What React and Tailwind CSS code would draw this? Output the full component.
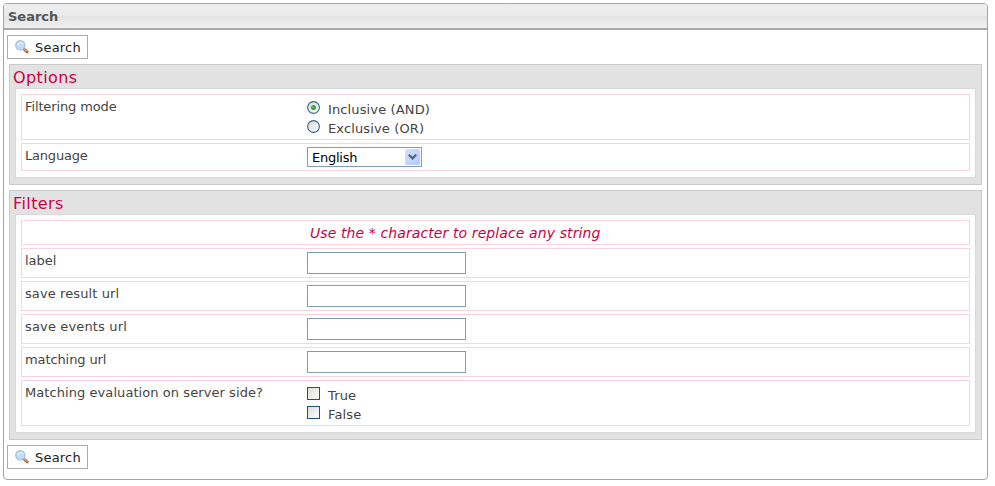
function SearchIcon() {
  return (
    <svg width="14" height="14" viewBox="0 0 14 14" className="block shrink-0">
      <path d="M9.6 9.600l2.600 2.300" stroke="#a5622c" strokeWidth="2.800" strokeLinecap="round" />
      <path d="M9.500 9.200l2.300 2.100" stroke="#e2aa68" strokeWidth="1.3" strokeLinecap="round" />
      <circle cx="5.3" cy="5.3" r="4.6" fill="#bfdcfa" stroke="#a3bfe3" strokeWidth="1.2" />
      <path d="M2 5.2C2 3.2 3.5 2 5.4 2c1.6 0 2.8.9 3.2 2.2C6.500 4 4.500 4.500 2 5.200z" fill="#d9ebfd" />
    </svg>
  );
}

function SearchButton() {
  return (
    <button className="flex h-6 w-[81px] items-center border border-[#ababab] bg-white pl-[7px] text-[13px] leading-4 text-[#222]">
      <SearchIcon />
      <span className="ml-[6px] pt-[2px] tracking-[0.2px]">Search</span>
    </button>
  );
}

function Section({ title, children }) {
  return (
    <section className="mx-[5px] mt-[5px] w-[973px] border border-[#cacaca] bg-[#e2e2e2] px-[5px] pb-[6px]">
      <h2 className="-ml-[2px] h-[23px] pt-[2px] text-[16px] leading-[22px] tracking-[0.4px] text-[#cc0044]">{title}</h2>
      <div className="flex flex-col gap-[3px] border border-[#d9d9d9] bg-white px-[5px] pt-[5px] pb-[6px]">
        {children}
      </div>
    </section>
  );
}

function Row({ label, className, tracking = 'tracking-normal', children }) {
  return (
    <div className={`flex border border-[#fbd3df] pl-[3px] ${className}`}>
      <div className={`w-[282px] shrink-0 pt-1 leading-4 ${tracking}`}>{label}</div>
      <div>{children}</div>
    </div>
  );
}

function Radio({ checked }) {
  return (
    <svg width="13" height="13" viewBox="0 0 13 13" className="mt-[-5px] block shrink-0">
      <defs>
        <linearGradient id="radio" x1="0" y1="0" x2="1" y2="1">
          <stop offset="0" stopColor="#d8d8d2" />
          <stop offset="1" stopColor="#fff" />
        </linearGradient>
      </defs>
      <circle cx="6.5" cy="6.5" r="5.9" fill="url(#radio)" stroke="#336592" strokeWidth="1.1" />
      {checked && <circle cx="6.5" cy="6.5" r="2.5" fill="#27a827" />}
      {checked && <circle cx="6" cy="5.900" r="1" fill="#5fd65a" />}
    </svg>
  );
}

function Checkbox() {
  return (
    <span className="mt-[-5px] block size-[13px] shrink-0 border border-[#1c5180] bg-linear-to-br from-[#dcdcd7] to-white" />
  );
}

function Choice({ control, children }) {
  return (
    <div className="flex h-[19px] items-center">
      {control}
      <span className="ml-2 leading-4 tracking-[0.13px]">{children}</span>
    </div>
  );
}

function TextInput() {
  return <input className="mt-[3px] block h-[22px] w-[159px] border border-[#7f9db9] bg-white px-1" />;
}

export default function App() {
  return (
    <main className="h-[486px] w-[995px] overflow-hidden bg-white pt-[3px] pl-[3px] font-['DejaVu_Sans',Verdana,sans-serif] text-[13px] text-[#444]">
      <div className="h-[477px] w-[985px] overflow-hidden rounded-[4px] border border-[#a5a5a5]">
        <header className="h-[26px] border-b-2 border-[#aaa] bg-[linear-gradient(#ededed_0,#ebebeb_12px,#e3e3e3_12px,#efefef_24px)] pl-1 text-[13px] leading-[25px] font-bold text-[#555]">
          Search
        </header>
        <div className="pt-[5px] pl-[3px]">
          <SearchButton />
        </div>
        <Section title="Options">
          <Row label="Filtering mode" tracking="tracking-[-0.12px]" className="h-[46px]">
            <div className="pt-[5px]">
              <Choice control={<Radio checked />}>Inclusive (AND)</Choice>
              <Choice control={<Radio />}>Exclusive (OR)</Choice>
            </div>
          </Row>
          <Row label="Language" tracking="tracking-[-0.2px]" className="h-7">
            <div className="mt-[3px] flex h-5 w-[115px] items-center justify-between border border-[#7f9db9] bg-white pr-px pl-1 text-black">
              <span className="pt-[2px] leading-4 tracking-[-0.25px]">English</span>
              <span className="flex h-4 w-[15px] items-center justify-center rounded-[2px] bg-linear-to-br from-[#d5e1fc] to-[#b3c9f8]">
                <svg width="9" height="6" viewBox="0 0 9 6">
                  <path d="M.8.8L4.500 4.400 8.200.8" fill="none" stroke="#4d6185" strokeWidth="2.200" />
                </svg>
              </span>
            </div>
          </Row>
        </Section>
        <Section title="Filters">
          <Row className="h-[25px]">
            <p className="pt-1 pl-[3px] text-[14px] leading-4 tracking-[0.1px] text-[#cc0044] italic">
              Use the * character to replace any string
            </p>
          </Row>
          <Row label="label" className="h-[30px]"><TextInput /></Row>
          <Row label="save result url" tracking="tracking-[0.1px]" className="h-[30px]"><TextInput /></Row>
          <Row label="save events url" tracking="tracking-[0.15px]" className="h-[30px]"><TextInput /></Row>
          <Row label="matching url" tracking="tracking-[-0.1px]" className="h-[30px]"><TextInput /></Row>
          <Row label="Matching evaluation on server side?" tracking="tracking-[0.07px]" className="h-[46px]">
            <div className="pt-[5px]">
              <Choice control={<Checkbox />}>True</Choice>
              <Choice control={<Checkbox />}>False</Choice>
            </div>
          </Row>
        </Section>
        <div className="pt-[5px] pl-[3px]">
          <SearchButton />
        </div>
      </div>
    </main>
  );
}
